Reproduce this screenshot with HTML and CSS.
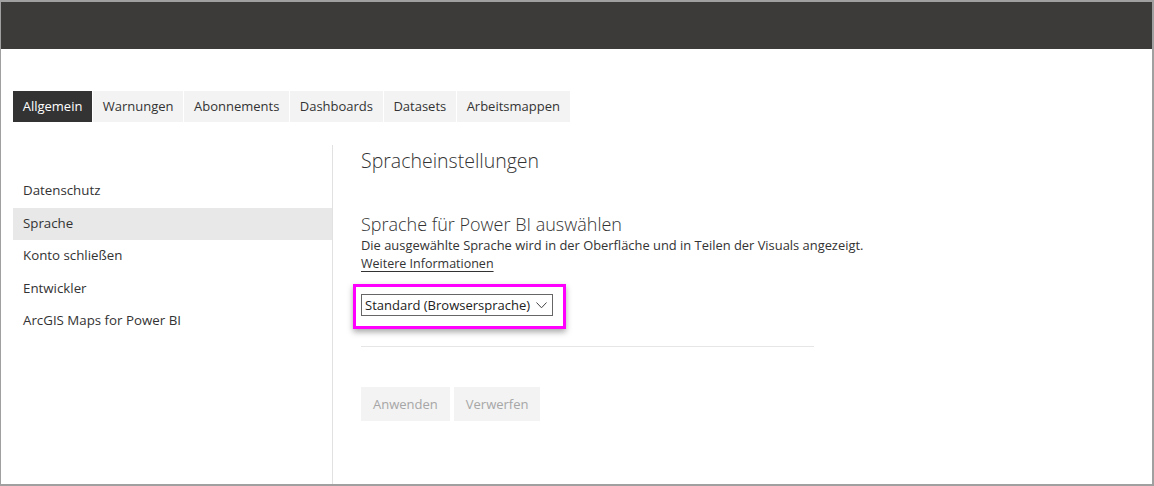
FILE: index.html
```html
<!DOCTYPE html>
<html lang="de">
<head>
<meta charset="utf-8">
<title>Einstellungen</title>
<link rel="stylesheet" href="styles.css">
</head>
<body>
<div class="frame">
  <header class="topbar"></header>
  <nav class="tabs">
    <div class="tab active">Allgemein</div>
    <div class="tab">Warnungen</div>
    <div class="tab">Abonnements</div>
    <div class="tab">Dashboards</div>
    <div class="tab">Datasets</div>
    <div class="tab">Arbeitsmappen</div>
  </nav>
  <div class="content">
    <aside class="sidebar">
      <div class="nav-item">Datenschutz</div>
      <div class="nav-item selected">Sprache</div>
      <div class="nav-item">Konto schließen</div>
      <div class="nav-item">Entwickler</div>
      <div class="nav-item">ArcGIS Maps for Power BI</div>
    </aside>
    <main class="main">
      <h1 class="title">Spracheinstellungen</h1>
      <h2 class="subtitle">Sprache für Power BI auswählen</h2>
      <p class="desc">Die ausgewählte Sprache wird in der Oberfläche und in Teilen der Visuals angezeigt.</p>
      <a class="link" href="#">Weitere Informationen</a>
      <div class="highlight">
        <div class="select">
          <span>Standard (Browsersprache)</span>
          <svg class="chev" width="11" height="7" viewBox="0 0 11 7"><polyline points="0.5,0.5 5.5,5.8 10.5,0.5" fill="none" stroke="#444" stroke-width="1"/></svg>
        </div>
      </div>
      <div class="rule"></div>
      <div class="buttons">
        <button class="btn">Anwenden</button>
        <button class="btn">Verwerfen</button>
      </div>
    </main>
  </div>
</div>
</body>
</html>
```

FILE: styles.css
```css
* { box-sizing: border-box; }
html, body { margin: 0; padding: 0; background: #fff; }
body { font-family: "Open Sans", "Noto Sans", sans-serif; color: #333; }

.frame {
  width: 1154px;
  height: 486px;
  border-style: solid;
  border-color: #a0a0a0;
  border-width: 2px 2px 2px 1px;
  display: flex;
  flex-direction: column;
  overflow: hidden;
}

.topbar {
  height: 47px;
  background: #3c3b39;
  flex: none;
}

.tabs {
  display: flex;
  gap: 1px;
  margin-top: 42px;
  padding-left: 12px;
  flex: none;
}
.tab {
  height: 31px;
  line-height: 30px;
  padding: 0 9.7px;
  background: #f3f3f3;
  font-size: 13px;
  color: #333;
}
.tab.active {
  background: #333;
  color: #fff;
}

.content {
  flex: 1;
  display: flex;
  margin-top: 23px;
}

.sidebar {
  width: 332px;
  flex: none;
  padding: 30px 0 0 12px;
  border-right: 1px solid #e1e1e1;
}
.nav-item {
  height: 32.6px;
  line-height: 31px;
  padding-left: 10px;
  font-size: 13.3px;
  color: #333;
}
.nav-item.selected { background: #e8e8e8; }

.main {
  flex: 1;
  display: flex;
  flex-direction: column;
  align-items: flex-start;
  padding-left: 28px;
}
.title {
  margin: 2px 0 0;
  font-size: 19.5px;
  font-weight: 300;
  line-height: 28px;
  color: #333;
}
.subtitle {
  margin: 38px 0 0;
  font-size: 18px;
  font-weight: 300;
  line-height: 22px;
  color: #333;
}
.desc {
  margin: 1px 0 0;
  font-size: 12.9px;
  line-height: 18px;
  color: #333;
}
.link {
  margin-top: 1px;
  font-size: 12.5px;
  line-height: 18px;
  color: #333;
  text-decoration: underline;
  text-underline-offset: 3px;
}

.highlight {
  margin: 11px 0 0 -8px;
  border: 3px solid #ff00ff;
  padding: 7px 10px 10px 5px;
  box-shadow: 0 3px 6px rgba(0,0,0,0.35);
}
.select {
  width: 192px;
  height: 22px;
  border: 1px solid #666;
  display: flex;
  align-items: center;
  justify-content: space-between;
  padding: 0 3px 0 3px;
  font-size: 13px;
  color: #222;
}
.chev { margin-right: 2px; }

.rule {
  width: 453px;
  height: 1px;
  background: #e6e6e6;
  margin-top: 17px;
}

.buttons {
  display: flex;
  gap: 4px;
  margin-top: 40px;
}
.btn {
  height: 34px;
  padding: 0 12px;
  border: none;
  background: #f3f3f3;
  color: #a6a6a6;
  font-family: inherit;
  font-size: 13px;
}
```
